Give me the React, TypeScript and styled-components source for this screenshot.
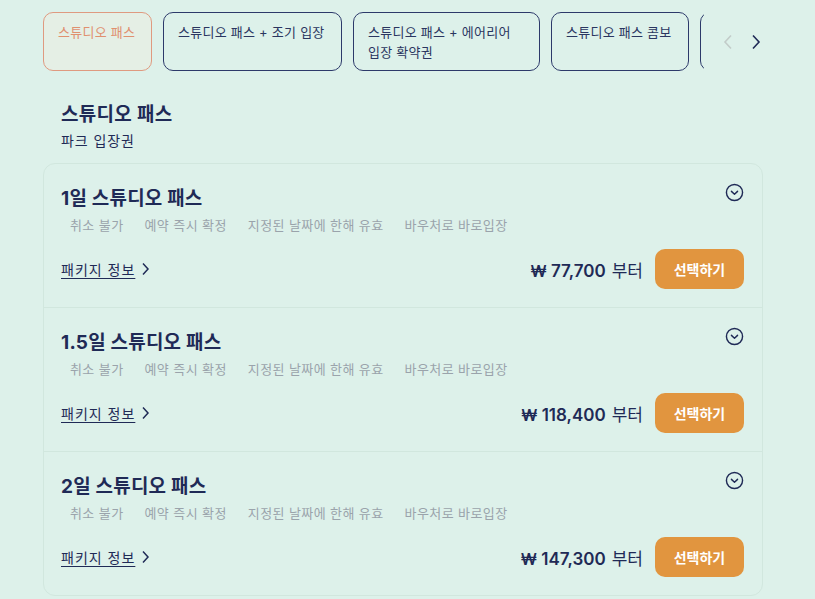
import styled, { createGlobalStyle } from 'styled-components'

const GlobalStyle = createGlobalStyle`
  body {
    margin: 0;
    background: #ddf1ea;
    font-family: Inter, "Noto Sans CJK KR", sans-serif;
    color: #1f2a56;
  }
`

const Page = styled.div`
  padding: 12px 0 0 43px;
  width: 815px;
  height: 599px;
  box-sizing: border-box;
  overflow: hidden;
`

const TabBar = styled.div`
  display: flex;
  align-items: center;
  width: 730px;
`

const TabStrip = styled.div`
  display: flex;
  gap: 11px;
  width: 661px;
  overflow: hidden;
  flex-shrink: 0;
`

const Tab = styled.button<{ $active?: boolean; $w: number }>`
  flex-shrink: 0;
  width: ${p => p.$w}px;
  height: 59px;
  box-sizing: border-box;
  padding: 9px 14px 0;
  border-radius: 10px;
  border: 1px solid ${p => (p.$active ? '#df9a80' : '#2d3a6a')};
  background: ${p => (p.$active ? '#e5efe5' : 'transparent')};
  color: ${p => (p.$active ? '#e0906f' : '#2a3560')};
  font-family: inherit;
  font-size: 13px;
  line-height: 20px;
  letter-spacing: 0.25px;
  text-align: left;
  align-self: flex-start;
  display: flex;
  align-items: flex-start;
  justify-content: flex-start;
  cursor: pointer;
`

const TabText = styled.span`
  display: block;
  white-space: nowrap;
`

const Arrows = styled.div`
  display: flex;
  gap: 16px;
  margin-left: 18px;
`

const ArrowButton = styled.button<{ $disabled?: boolean }>`
  border: none;
  background: none;
  padding: 0;
  width: 12px;
  height: 16px;
  color: ${p => (p.$disabled ? '#c2ccc9' : '#1f2a56')};
  display: flex;
  align-items: center;
  justify-content: center;
`

const Heading = styled.div`
  padding: 31px 18px 0;
`

const Title = styled.h2`
  margin: 0;
  font-size: 19px;
  line-height: 26px;
  font-weight: 700;
  letter-spacing: 0.3px;
`

const Sub = styled.div`
  font-size: 14px;
  line-height: 20px;
  margin-top: 3px;
  letter-spacing: 0.9px;
`

const Card = styled.div`
  margin-top: 12px;
  width: 720px;
  box-sizing: border-box;
  border: 1px solid #d1e7de;
  border-radius: 12px;
`

const Item = styled.div`
  padding: 22px 18px 18px 17px;
  & + & {
    border-top: 1px solid #d1e7de;
  }
`

const ItemHead = styled.div`
  display: flex;
  justify-content: space-between;
  align-items: flex-start;
`

const ItemTitle = styled.h3`
  margin: 0;
  font-size: 19px;
  line-height: 26px;
  font-weight: 700;
  letter-spacing: 0.2px;
`

const Expand = styled.button`
  border: none;
  background: none;
  padding: 0;
  margin-top: -3px;
  color: #1f2a56;
  display: flex;
`

const Tags = styled.ul`
  display: flex;
  list-style: none;
  padding: 0;
  margin: 3px 0 0;
`

const Tag = styled.li`
  padding: 0 10px 0 9px;
  font-size: 13px;
  line-height: 20px;
  letter-spacing: 0.4px;
  color: #9aa3ab;
  & + & {
    padding-left: 11px;
  }
`

const ItemFoot = styled.div`
  display: flex;
  justify-content: space-between;
  align-items: center;
  margin-top: 14px;
`

const InfoLink = styled.a`
  display: flex;
  align-items: center;
  gap: 6px;
  font-size: 14px;
  letter-spacing: 1px;
  color: #1f2a56;
  cursor: pointer;
  span {
    text-decoration: underline;
    text-underline-offset: 3px;
  }
`

const PriceRow = styled.div`
  display: flex;
  align-items: center;
  gap: 12px;
`

const Price = styled.div`
  font-size: 17px;
  display: flex;
  align-items: baseline;
  gap: 6px;
  b {
    font-weight: 600;
  }
`

const Won = styled.span`
  font-weight: 600;
  font-size: 16px;
`

const SelectButton = styled.button`
  width: 89px;
  height: 40px;
  border: none;
  border-radius: 10px;
  background: #e1953f;
  color: #fff;
  font-family: inherit;
  font-size: 14px;
  font-weight: 700;
  cursor: pointer;
`

const tabs = [
  { label: '스튜디오 패스', w: 109, active: true },
  { label: '스튜디오 패스 + 조기 입장', w: 179 },
  { label: '스튜디오 패스 + 에어리어\n입장 확약권', w: 187 },
  { label: '스튜디오 패스 콤보', w: 138 },
  { label: '', w: 180 },
]

const passes = [
  { name: '1일 스튜디오 패스', price: '77,700' },
  { name: '1.5일 스튜디오 패스', price: '118,400' },
  { name: '2일 스튜디오 패스', price: '147,300' },
]

const tagList = ['취소 불가', '예약 즉시 확정', '지정된 날짜에 한해 유효', '바우처로 바로입장']

const Chevron = ({ dir }: { dir: 'left' | 'right' }) => (
  <svg width="10" height="16" viewBox="0 0 10 16" fill="none" stroke="currentColor" strokeWidth="1.6">
    {dir === 'left' ? <path d="M8 1.5 2 8l6 6.5" /> : <path d="M2 1.5 8 8l-6 6.5" />}
  </svg>
)

const SmallChevron = () => (
  <svg width="9" height="14" viewBox="0 0 9 14" fill="none" stroke="currentColor" strokeWidth="1.5">
    <path d="M2 1.5 7 7l-5 5.5" />
  </svg>
)

const CircleDown = () => (
  <svg width="19" height="19" viewBox="0 0 20 20" fill="none" stroke="currentColor" strokeWidth="1.5">
    <circle cx="10" cy="10" r="8.5" />
    <path d="M6.8 8.8 10 11.8l3.2-3" strokeLinecap="round" strokeLinejoin="round" />
  </svg>
)

export default function App() {
  return (
    <Page>
      <GlobalStyle />
      <TabBar>
        <TabStrip>
          {tabs.map((t, i) => (
            <Tab key={i} $active={t.active} $w={t.w}>
              <TabText>
                {t.label.split('\n').map((l, j) => (
                  <div key={j}>{l}</div>
                ))}
              </TabText>
            </Tab>
          ))}
        </TabStrip>
        <Arrows>
          <ArrowButton $disabled>
            <Chevron dir="left" />
          </ArrowButton>
          <ArrowButton>
            <Chevron dir="right" />
          </ArrowButton>
        </Arrows>
      </TabBar>

      <Heading>
        <Title>스튜디오 패스</Title>
        <Sub>파크 입장권</Sub>
      </Heading>

      <Card>
        {passes.map(p => (
          <Item key={p.name}>
            <ItemHead>
              <ItemTitle>{p.name}</ItemTitle>
              <Expand>
                <CircleDown />
              </Expand>
            </ItemHead>
            <Tags>
              {tagList.map(t => (
                <Tag key={t}>{t}</Tag>
              ))}
            </Tags>
            <ItemFoot>
              <InfoLink>
                <span>패키지 정보</span>
                <SmallChevron />
              </InfoLink>
              <PriceRow>
                <Price>
                  <b>
                    <Won>₩</Won> {p.price}
                  </b>
                  <span>부터</span>
                </Price>
                <SelectButton>선택하기</SelectButton>
              </PriceRow>
            </ItemFoot>
          </Item>
        ))}
      </Card>
    </Page>
  )
}
